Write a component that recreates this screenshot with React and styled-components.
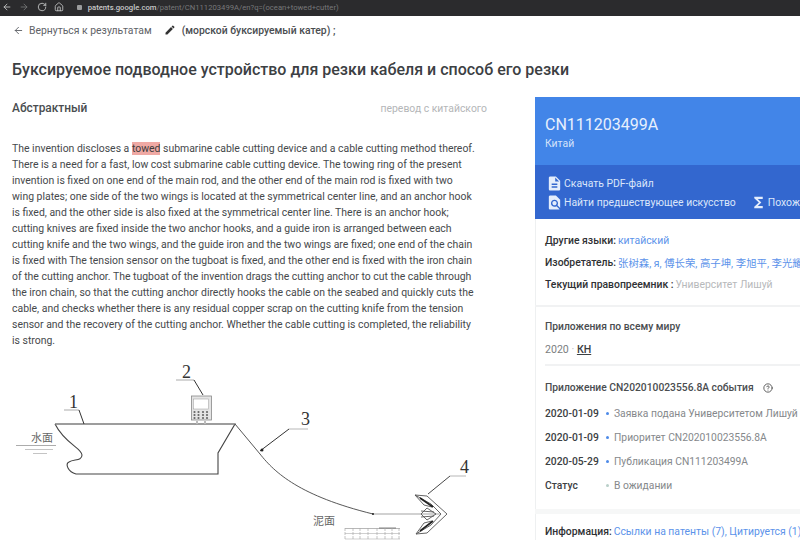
import React from "react";
import styled, { createGlobalStyle } from "styled-components";
import { ArrowLeft, ArrowRight, RotateCw, Home, CircleHelp } from "lucide-react";

const GlobalStyle = createGlobalStyle`
  html, body {
    margin: 0;
    padding: 0;
    background: #fff;
    overflow: hidden;
  }
  body {
    font-family: Roboto, "Noto Sans CJK SC", sans-serif;
  }
`;

const Page = styled.div`
  width: 800px;
  height: 540px;
  overflow: hidden;
  display: flex;
  flex-direction: column;
  color: #3c4043;
`;

const BrowserBar = styled.div`
  height: 16px;
  flex: none;
  background: #2b2b2d;
  display: flex;
  align-items: center;
  padding: 0 0 2px 0;
  box-sizing: border-box;
  color: #b9babb;
`;

const NavIcon = styled.span`
  display: flex;
  width: 17.3px;
  justify-content: center;
  color: ${(p) => (p.$dim ? "#77787a" : "#c9caca")};
  &:first-child {
    margin-left: -1.5px;
  }
`;

const Lock = styled.span`
  width: 5px;
  height: 5px;
  margin: 0 6px 0 9px;
  border-radius: 1px;
  background: #9a9b9c;
`;

const Url = styled.div`
  font-size: 7.7px;
  color: #77787a;
  b {
    font-weight: 500;
    color: #c8c9c9;
  }
`;

const Toolbar = styled.div`
  height: 28px;
  flex: none;
  display: flex;
  align-items: center;
  padding-left: 13px;
  font-size: 10.4px;
`;

const BackLink = styled.span`
  display: flex;
  align-items: center;
  gap: 5px;
  color: #5f6368;
`;

const Query = styled.span`
  display: flex;
  align-items: center;
  gap: 6px;
  margin-left: 12px;
  font-weight: 500;
  color: #4a4d50;
`;

const Title = styled.h1`
  margin: 0;
  height: 53px;
  padding: 16px 0 0 12px;
  box-sizing: border-box;
  flex: none;
  font-size: 16px;
  line-height: 20px;
  font-weight: 500;
  color: #3c4043;
`;

const Columns = styled.div`
  display: flex;
  flex: 1;
  min-height: 0;
`;

const LeftColumn = styled.div`
  width: 535px;
  flex: none;
  padding-left: 12px;
  box-sizing: border-box;
`;

const AbstractHead = styled.div`
  display: flex;
  justify-content: space-between;
  align-items: center;
  height: 22px;
  padding-right: 48px;
`;

const AbstractTitle = styled.h2`
  margin: 0;
  font-size: 11.9px;
  font-weight: 500;
  color: #4a4d50;
`;

const Translated = styled.span`
  font-size: 10.4px;
  color: #b4b6b8;
`;

const Abstract = styled.p`
  margin: 22px 0 0;
  font-size: 10.45px;
  line-height: 16px;
  white-space: nowrap;
  color: #46494c;
  mark {
    background: #efa9a4;
    color: #3c3c3c;
  }
`;

const Drawing = styled.svg`
  display: block;
  margin: 7px 0 0 -12px;
  width: 500px;
  height: 185px;
  flex: none;
`;

const Panel = styled.aside`
  flex: 1;
  min-width: 0;
  white-space: nowrap;
  overflow: hidden;
  background: #fff;
  box-shadow: inset 1px 0 0 #eef0f1;
`;

const PanelHead = styled.div`
  height: 68px;
  background: #4285e8;
  color: #fff;
  padding: 19px 0 0 10px;
  box-sizing: border-box;
`;

const PatentNumber = styled.div`
  font-size: 16px;
  line-height: 18px;
  color: #e8f0fd;
`;

const Country = styled.div`
  font-size: 10.4px;
  margin-top: 3px;
  color: #d5e3fa;
`;

const ActionBar = styled.div`
  height: 54px;
  background: #3367cf;
  padding: 9px 0 0 11px;
  box-sizing: border-box;
  display: flex;
  flex-direction: column;
  gap: 1px;
`;

const ActionRow = styled.div`
  display: flex;
  gap: 14px;
  height: 18px;
`;

const Action = styled.span`
  display: flex;
  align-items: center;
  gap: 1px;
  font-size: 10.4px;
  color: #dbe6fa;
  svg {
    width: 17px;
    height: 17px;
    fill: #e4edfc;
    flex: none;
  }
`;

const Section = styled.section`
  padding: ${(p) => p.$pad};
  border-bottom: ${(p) => (p.$line ? "2px solid #f1f2f3" : "none")};
`;

const InfoRow = styled.div`
  height: 22px;
  display: flex;
  align-items: center;
  gap: 2px;
  font-size: 10.4px;
  color: #2f3134;
  b {
    font-weight: 500;
  }
`;

const Blue = styled.span`
  color: #5c93ea;
`;

const Muted = styled.span`
  color: #b7b9bb;
`;

const SectionTitle = styled.div`
  font-size: 10.3px;
  font-weight: 500;
  color: #4a4d50;
  display: flex;
  align-items: center;
  gap: 9px;
  margin-bottom: ${(p) => p.$gap || 0}px;
`;

const Region = styled.div`
  margin-top: 10px;
  font-size: 10.6px;
  color: #7b7e81;
  padding-bottom: 8px;
  border-bottom: 2px solid #f1f2f3;
  u {
    color: #3c4043;
    font-weight: 500;
  }
`;

const EventRow = styled.div`
  height: 24px;
  display: flex;
  align-items: center;
  font-size: 10.3px;
  color: #85888b;
`;

const EventDate = styled.span`
  width: 55px;
  flex: none;
  font-weight: 500;
  color: #3c4043;
`;

const Dot = styled.span`
  width: 3px;
  height: 3px;
  margin: 0 5px 0 6px;
  border-radius: 50%;
  background: ${(p) => p.$color};
  flex: none;
`;

const Band = styled.div`
  height: 5px;
  background: #f6f7f7;
`;

function PatentDrawing() {
  const keys = [];
  for (let row = 0; row < 3; row++) {
    [194.5, 198.5, 203, 207].forEach((cx) => {
      keys.push(<circle key={`${row}-${cx}`} cx={cx} cy={411 + row * 3} r="1.1" fill="#666" />);
    });
  }
  const grid = [345, 353, 360, 368, 377, 385, 392, 399].map((x) => (
    <line key={x} x1={x} y1="527" x2={x} y2="540" stroke="#aaa" strokeWidth="0.7" strokeDasharray="3 1" />
  ));
  return (
    <Drawing viewBox="0 355 500 185">
      {/* hull */}
      <path d="M55 423 H235 L218 452 V473 H76 C68 471 65 463 69 461 C74 458 82 460 82 454 C82 447 65 443 55 423" fill="none" stroke="#444" strokeWidth="1.1" />
      <line x1="55" y1="423" x2="235" y2="423" stroke="#999" strokeWidth="1.2" />
      {/* water level */}
      <text x="31" y="441" fontSize="11" fontFamily="'Noto Sans CJK SC'" fill="#666">水面</text>
      <line x1="16" y1="444.5" x2="56" y2="444.5" stroke="#888" strokeWidth="0.7" />
      <line x1="25" y1="448.5" x2="53" y2="448.5" stroke="#aaa" strokeWidth="0.7" />
      <line x1="33" y1="452.5" x2="47" y2="452.5" stroke="#aaa" strokeWidth="0.7" />
      {/* label 1 */}
      <text x="69" y="407" fontSize="18" fontFamily="'Liberation Serif'" fill="#333">1</text>
      <line x1="64" y1="409" x2="79" y2="409" stroke="#888" strokeWidth="0.7" />
      <line x1="79" y1="409" x2="84" y2="423" stroke="#333" />
      {/* label 2 and monitor */}
      <text x="182" y="377" fontSize="18" fontFamily="'Liberation Serif'" fill="#333">2</text>
      <line x1="176" y1="379" x2="194" y2="379" stroke="#888" strokeWidth="0.7" />
      <line x1="194" y1="379" x2="203" y2="394" stroke="#333" />
      <rect x="191.5" y="395" width="20" height="24" fill="#e4e4e4" stroke="#888" strokeWidth="0.8" />
      <rect x="193.5" y="398" width="15" height="10" fill="#fff" stroke="#999" strokeWidth="0.5" />
      {keys}
      <rect x="196" y="420" width="2" height="3" fill="#bbb" />
      <rect x="204" y="420" width="2" height="3" fill="#bbb" />
      {/* chain */}
      <path d="M235 423 L260 453 C275 472 300 495 373 513" fill="none" stroke="#444" strokeWidth="0.9" />
      <line x1="373" y1="513" x2="440" y2="513" stroke="#999" strokeWidth="0.9" />
      <circle cx="373" cy="513" r="1" fill="#222" />
      {/* label 3 */}
      <text x="301" y="424" fontSize="18" fontFamily="'Liberation Serif'" fill="#333">3</text>
      <line x1="289" y1="428" x2="308" y2="428" stroke="#999" strokeWidth="0.7" />
      <line x1="289" y1="428" x2="260" y2="450" stroke="#333" strokeWidth="1" />
      <circle cx="262" cy="449" r="1.5" fill="#222" />
      {/* label 4 and anchor */}
      <text x="460" y="472" fontSize="18" fontFamily="'Liberation Serif'" fill="#333">4</text>
      <line x1="450" y1="475" x2="466" y2="475" stroke="#999" strokeWidth="0.7" />
      <line x1="450" y1="475" x2="428" y2="493" stroke="#333" strokeWidth="0.9" />
      <g fill="none" stroke="#555" strokeWidth="0.9">
        <path d="M415 494 L427 495 L447 513 L427 532 L416 533" />
        <path d="M415 494 L431 503 L441 513 L431 524 L416 533" />
        <path d="M415 494 L424 504 L432 506" />
        <path d="M416 533 L424 522 L432 520" />
        <path d="M421 513 L427 507 L436 513 L427 519 Z" />
        <path d="M421 510 L434 511 M421 516 L434 515" />
      </g>
      <path d="M420 497 L433 506 M420 530 L433 520" stroke="#222" strokeWidth="1.6" />
      {/* mud level */}
      <text x="313" y="524" fontSize="11" fontFamily="'Noto Sans CJK SC'" fill="#666">泥面</text>
      <line x1="345" y1="527.5" x2="400" y2="527.5" stroke="#999" strokeWidth="0.7" />
      <line x1="379" y1="527" x2="396" y2="527" stroke="#666" strokeWidth="0.8" />
      <line x1="345" y1="532.5" x2="400" y2="532.5" stroke="#bbb" strokeWidth="0.7" />
      <line x1="345" y1="538" x2="400" y2="538" stroke="#bbb" strokeWidth="0.7" />
      {grid}
    </Drawing>
  );
}

export default function App() {
  return (
    <Page>
      <GlobalStyle />
      <BrowserBar>
        <NavIcon><ArrowLeft size={10} /></NavIcon>
        <NavIcon $dim><ArrowRight size={10} /></NavIcon>
        <NavIcon><RotateCw size={10} /></NavIcon>
        <NavIcon><Home size={10} /></NavIcon>
        <Lock />
        <Url><b>patents.google.com</b>/patent/CN111203499A/en?q=(ocean+towed+cutter)</Url>
      </BrowserBar>
      <Toolbar>
        <BackLink>
          <ArrowLeft size={11} strokeWidth={2} />
          Вернуться к результатам
        </BackLink>
        <Query>
          <svg width="12" height="12" viewBox="0 0 24 24" fill="#333">
            <path d="M3 17.25V21h3.75L17.81 9.94l-3.75-3.75L3 17.25zM20.71 7.04c.39-.39.39-1.02 0-1.41l-2.34-2.34c-.39-.39-1.02-.39-1.41 0l-1.83 1.83 3.75 3.75 1.83-1.83z" />
          </svg>
          (морской буксируемый катер) ;
        </Query>
      </Toolbar>
      <Title>Буксируемое подводное устройство для резки кабеля и способ его резки</Title>
      <Columns>
        <LeftColumn>
          <AbstractHead>
            <AbstractTitle>Абстрактный</AbstractTitle>
            <Translated>перевод с китайского</Translated>
          </AbstractHead>
          <Abstract>
            The invention discloses a <mark>towed</mark> submarine cable cutting device and a cable cutting method thereof.<br />
            There is a need for a fast, low cost submarine cable cutting device. The towing ring of the present<br />
            invention is fixed on one end of the main rod, and the other end of the main rod is fixed with two<br />
            wing plates; one side of the two wings is located at the symmetrical center line, and an anchor hook<br />
            is fixed, and the other side is also fixed at the symmetrical center line. There is an anchor hook;<br />
            cutting knives are fixed inside the two anchor hooks, and a guide iron is arranged between each<br />
            cutting knife and the two wings, and the guide iron and the two wings are fixed; one end of the chain<br />
            is fixed with The tension sensor on the tugboat is fixed, and the other end is fixed with the iron chain<br />
            of the cutting anchor. The tugboat of the invention drags the cutting anchor to cut the cable through<br />
            the iron chain, so that the cutting anchor directly hooks the cable on the seabed and quickly cuts the<br />
            cable, and checks whether there is any residual copper scrap on the cutting knife from the tension<br />
            sensor and the recovery of the cutting anchor. Whether the cable cutting is completed, the reliability<br />
            is strong.
          </Abstract>
          <PatentDrawing />
        </LeftColumn>
        <Panel>
          <PanelHead>
            <PatentNumber>CN111203499A</PatentNumber>
            <Country>Китай</Country>
          </PanelHead>
          <ActionBar>
            <ActionRow>
              <Action>
                <svg viewBox="0 0 24 24"><path d="M14 2H6c-1.1 0-1.99.9-1.99 2L4 20c0 1.1.89 2 1.99 2H18c1.1 0 2-.9 2-2V8l-6-6zm2 16H8v-2h8v2zm0-4H8v-2h8v2zm-3-5V3.5L18.5 9H13z" /></svg>
                Скачать PDF-файл
              </Action>
            </ActionRow>
            <ActionRow>
              <Action>
                <svg viewBox="0 0 24 24"><path d="M20 19.59V8l-6-6H6c-1.1 0-1.99.9-1.99 2L4 20c0 1.1.89 2 1.99 2H18c.45 0 .85-.15 1.19-.4l-4.43-4.43c-.8.52-1.74.83-2.76.83-2.76 0-5-2.24-5-5s2.24-5 5-5 5 2.24 5 5c0 1.02-.31 1.96-.83 2.75L20 19.59zM9 13c0 1.66 1.34 3 3 3s3-1.34 3-3-1.34-3-3-3-3 1.34-3 3z" /></svg>
                Найти предшествующее искусство
              </Action>
              <Action>
                <svg viewBox="0 0 24 24"><path d="M18 4H6v2l6.5 6L6 18v2h12v-3h-7l5-5-5-5h7z" /></svg>
                Похожие
              </Action>
            </ActionRow>
          </ActionBar>
          <Section $line $pad="10px 0 10px 10px">
            <InfoRow><b>Другие языки:</b> <Blue>китайский</Blue></InfoRow>
            <InfoRow><b>Изобретатель:</b> <Blue>张树森, я, 傅长荣, 高子坤, 李旭平, 李光耀</Blue></InfoRow>
            <InfoRow><b>Текущий правопреемник :</b> <Muted>Университет Лишуй</Muted></InfoRow>
          </Section>
          <Section $pad="13px 0 0 10px">
            <SectionTitle>Приложения по всему миру</SectionTitle>
            <Region>2020 <Muted>·</Muted> <u>КН</u></Region>
          </Section>
          <Section $pad="15px 0 12px 10px">
            <SectionTitle $gap={7}>
              Приложение CN202010023556.8A события
              <CircleHelp size={10} color="#444" />
            </SectionTitle>
            <EventRow><EventDate>2020-01-09</EventDate><Dot $color="#4d8ae8" />Заявка подана Университетом Лишуй</EventRow>
            <EventRow><EventDate>2020-01-09</EventDate><Dot $color="#4d8ae8" />Приоритет CN202010023556.8A</EventRow>
            <EventRow><EventDate>2020-05-29</EventDate><Dot $color="#4d8ae8" />Публикация CN111203499A</EventRow>
            <EventRow><EventDate>Статус</EventDate><Dot $color="#b9cfc9" />В ожидании</EventRow>
          </Section>
          <Band />
          <Section $pad="6px 0 0 10px">
            <InfoRow><b>Информация:</b> <Blue>Ссылки на патенты (7), Цитируется (1)</Blue></InfoRow>
          </Section>
        </Panel>
      </Columns>
    </Page>
  );
}
